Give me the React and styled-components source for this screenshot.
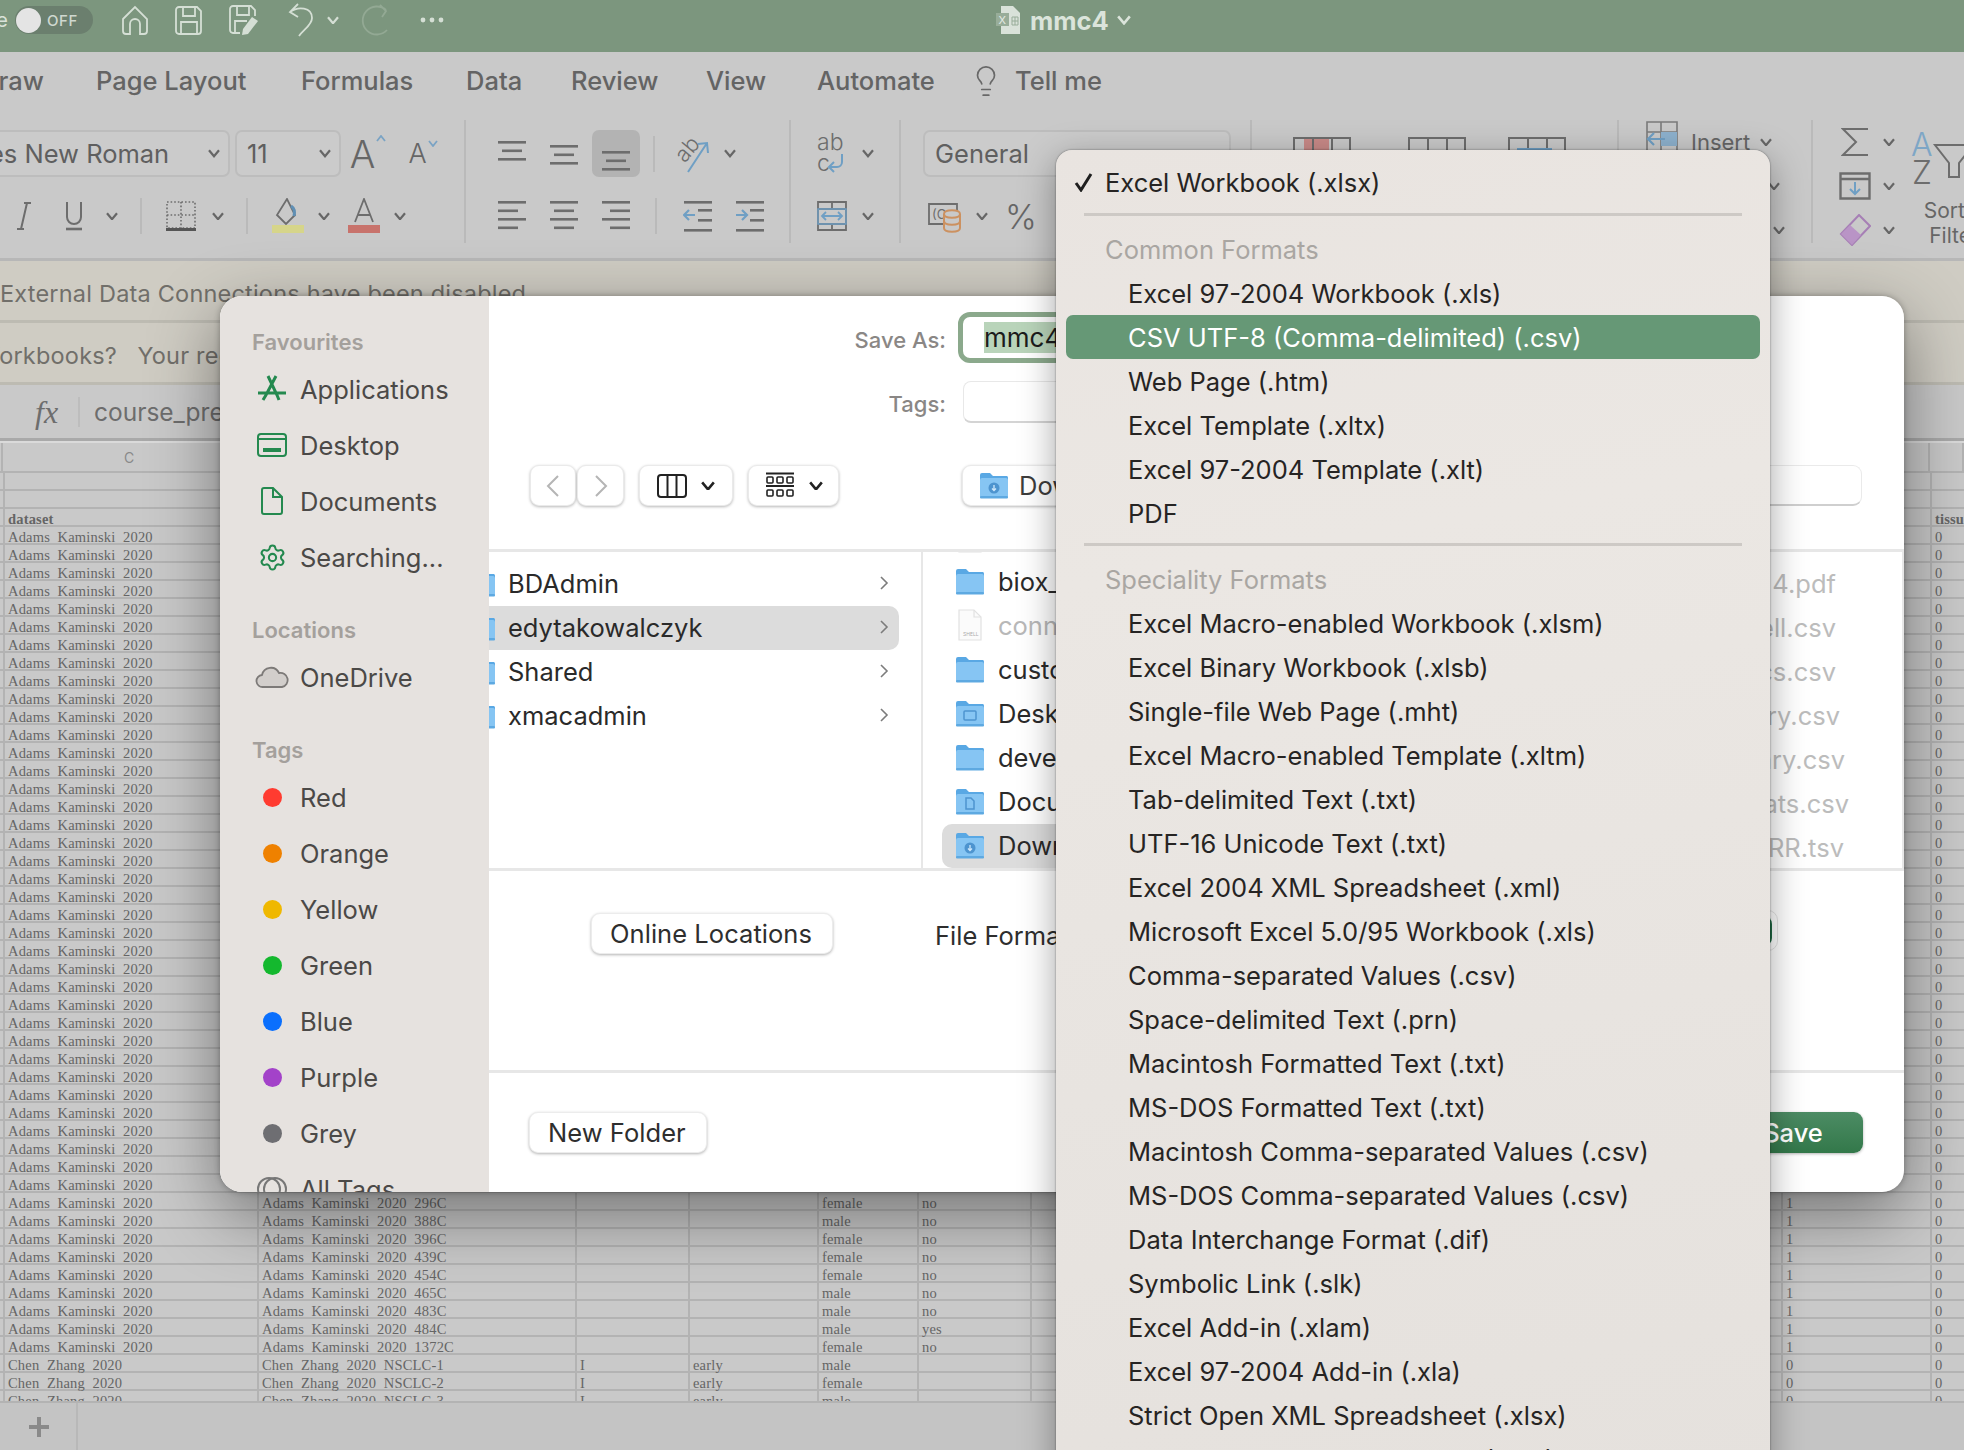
import React from "react";
import styled, { createGlobalStyle } from "styled-components";
import { Settings, Lightbulb } from "lucide-react";

const GlobalStyle = createGlobalStyle`
  html, body {
    margin: 0;
    padding: 0;
    background: #c8c8c8;
  }
  * {
    box-sizing: border-box;
  }
  svg {
    flex: none;
  }
`;

const UI = `Inter, "Liberation Sans", sans-serif`;

const Page = styled.div`
  position: relative;
  width: 1964px;
  height: 1450px;
  overflow: hidden;
  display: flex;
  flex-direction: column;
  font-family: ${UI};
  background: #c8c8c8;
`;

/* title bar */
const TitleBar = styled.div`
  flex: none;
  height: 52px;
  background: #7c967e;
  display: flex;
  align-items: center;
  padding-bottom: 12px;
  color: #d9e2d9;
`;

const AutoTail = styled.div`
  width: 8px;
  margin-right: 7px;
  display: flex;
  justify-content: flex-end;
  overflow: hidden;
  font-size: 20px;
`;

const Toggle = styled.div`
  width: 78px;
  height: 28px;
  border-radius: 14px;
  background: #6b7f6e;
  display: flex;
  align-items: center;
  gap: 6px;
  padding-left: 1px;
  font-size: 15px;
  font-weight: 500;
  letter-spacing: 0.6px;
  color: #cfd8cf;
`;

const Knob = styled.span`
  width: 25px;
  height: 25px;
  border-radius: 50%;
  background: #e4e4e4;
`;

const Slot = styled.div`
  flex: none;
  width: ${(p) => p.$w}px;
  display: flex;
  align-items: center;
  justify-content: center;
  color: #686868;
`;

const TitleText = styled.span`
  font-size: 25.5px;
  font-weight: 700;
  color: #dbe4db;
  margin: 0 8px 0 9px;
`;

const Spacer = styled.div`
  flex: none;
  width: ${(p) => p.$w}px;
`;

/* ribbon */
const Ribbon = styled.div`
  flex: none;
  height: 209px;
  border-bottom: 3px solid #b7b7b7;
  background: #c9c9c9;
  display: flex;
  flex-direction: column;
`;

const Tabs = styled.div`
  flex: none;
  height: 58px;
  margin-left: -20px;
  display: flex;
  align-items: center;
  padding-bottom: 1px;
  color: #616161;
  font-size: 25.5px;
  font-weight: 500;
`;

const Tab = styled.div`
  flex: none;
  width: ${(p) => p.$w}px;
  white-space: nowrap;
  color: #646464;
`;

const RibbonBody = styled.div`
  flex: none;
  margin-top: 10px;
  height: 123px;
  display: flex;
`;

const Group = styled.div`
  flex: none;
  width: ${(p) => p.$w}px;
  height: 123px;
  padding-left: ${(p) => p.$pad || 0}px;
  border-right: 2px solid #bababa;
  display: flex;
  flex-direction: column;
`;

const TopRow = styled.div`
  flex: none;
  margin-top: 10px;
  height: 47px;
  display: flex;
  align-items: center;
`;

const BottomRow = styled.div`
  flex: none;
  margin-top: 15px;
  height: 48px;
  display: flex;
  align-items: center;
`;

const TriRow = styled.div`
  flex: none;
  height: 44px;
  display: flex;
  align-items: center;
`;

const Select = styled.div`
  flex: none;
  width: ${(p) => p.$w}px;
  height: 47px;
  margin-left: ${(p) => p.$ml || 0}px;
  margin-right: ${(p) => p.$mr || 0}px;
  padding: 0 8px 0 ${(p) => p.$pl || 10}px;
  border: 2px solid #bdbdbd;
  border-radius: 7px;
  background: #cbcbcb;
  display: flex;
  align-items: center;
  justify-content: space-between;
  font-size: 25.5px;
  color: #5f5f5f;
  white-space: nowrap;
`;

const Pressed = styled(Slot)`
  height: 47px;
  margin: 0 2px;
  width: 48px;
  background: #b3b3b3;
  border-radius: 7px;
`;

const GrowA = styled.span`
  display: inline-flex;
  align-items: flex-start;
  gap: 1px;
  font-weight: 300;
  font-size: ${(p) => p.$size}px;
  line-height: 1;
  color: #666;
`;

const Percent = styled.span`
  font-size: 34px;
  font-weight: 300;
  color: #666;
`;

const InsertLabel = styled.span`
  font-size: 22px;
  color: #666;
  margin: 0 10px 0 12px;
`;

const EditRow = styled.div`
  flex: none;
  display: flex;
  height: 123px;
`;

const EditIcons = styled.div`
  width: 92px;
  padding-left: 22px;
  display: flex;
  flex-direction: column;
`;

const SortCol = styled.div`
  width: 64px;
  display: flex;
  flex-direction: column;
  align-items: center;
  padding-top: 10px;
  margin-left: 6px;
  font-size: 21px;
  line-height: 25px;
  color: #666;
  white-space: nowrap;
`;

const SortText = styled.span`
  margin-left: 22px;
  margin-top: ${(p) => p.$mt || 0}px;
`;

/* message bars */
const Notice = styled.div`
  flex: none;
  height: 62px;
  background: #cfccc3;
  border-bottom: 3px solid #bdbbb2;
  display: flex;
  align-items: center;
  padding-top: 5px;
  font-size: 23.5px;
  letter-spacing: 0.2px;
  color: #716f6a;
  white-space: nowrap;
  margin-left: ${(p) => p.$ml || 0}px;
`;

const FormulaBar = styled.div`
  flex: none;
  height: 53px;
  background: #c9c9c9;
  display: flex;
  align-items: center;
  padding-top: 1px;
  color: #6d6d6d;
  font-size: 24.5px;
`;

const Fx = styled.span`
  width: 80px;
  padding-left: 35px;
  font-family: "Liberation Serif", serif;
  font-style: italic;
  font-size: 32px;
  border-right: 2px solid #bdbdbd;
  line-height: 30px;
`;

const FormulaText = styled.span`
  margin-left: 14px;
`;

/* sheet */
const Sheet = styled.div`
  flex: 1;
  min-height: 0;
  overflow: hidden;
  background: #c9c9c9;
  border-top: 3px solid #a9a9a9;
  font-family: "Liberation Serif", serif;
  font-size: 14.5px;
  color: #656565;
`;

const HeaderRow = styled.div`
  height: 32px;
  display: flex;
  border-top: 2px solid #dadada;
  border-bottom: 2px solid #b3b3b3;
`;

const HeaderCell = styled.div`
  flex: none;
  width: ${(p) => p.$w}px;
  display: flex;
  align-items: center;
  justify-content: center;
  font-family: ${UI};
  font-size: 14px;
  color: #8a8a8a;
  border-right: 2px solid #b3b3b3;
`;

const SheetRow = styled.div`
  height: 18px;
  display: flex;
`;

const Cell = styled.div`
  flex: none;
  width: ${(p) => p.$w}px;
  height: 18px;
  padding-left: 3px;
  line-height: 21px;
  white-space: pre;
  overflow-x: clip;
  overflow-y: visible;
  letter-spacing: 0.18px;
  font-weight: ${(p) => (p.$head ? 700 : 400)};
  border-right: 2px solid #b3b3b3;
  border-bottom: 2px solid #b3b3b3;
`;

const BottomBar = styled.div`
  flex: none;
  height: 49px;
  background: #c4c4c4;
  border-top: 2px solid #b3b3b3;
  display: flex;
`;

const AddSheet = styled.div`
  width: 78px;
  padding-left: 2px;
  display: flex;
  align-items: center;
  justify-content: center;
  border-right: 2px solid #b8b8b8;
`;

/* save dialog */
const Dialog = styled.div`
  position: absolute;
  left: 220px;
  top: 296px;
  width: 1684px;
  height: 896px;
  border-radius: 22px;
  overflow: hidden;
  background: #fff;
  display: flex;
`;

const DialogShadow = styled.div`
  position: absolute;
  left: 220px;
  top: 296px;
  width: 1684px;
  height: 896px;
  border-radius: 22px;
  box-shadow: 0 22px 70px rgba(0, 0, 0, 0.44), 0 0 6px rgba(0, 0, 0, 0.3);
`;

const Sidebar = styled.div`
  flex: none;
  width: 269px;
  background: #e6e2df;
  padding: 24px 0 0 32px;
  overflow: hidden;
`;

const SideHead = styled.div`
  height: 41px;
  margin-top: ${(p) => (p.$first ? 0 : 23)}px;
  padding-top: 2px;
  display: flex;
  align-items: center;
  font-size: 22px;
  font-weight: 600;
  color: #a4a09c;
`;

const SideItem = styled.div`
  height: 56px;
  display: flex;
  align-items: center;
  gap: 8px;
  font-size: 25.5px;
  color: #4b4947;
`;

const SideIcon = styled.span`
  flex: none;
  width: 40px;
  display: flex;
  align-items: center;
  justify-content: center;
  color: #24894f;
`;

const TagDot = styled.span`
  width: 19px;
  height: 19px;
  border-radius: 50%;
  background: ${(p) => p.$color};
`;

const Main = styled.div`
  flex: 1;
  min-width: 0;
  display: flex;
  flex-direction: column;
`;

const Head = styled.div`
  flex: none;
  height: 253px;
  padding-top: 16px;
  display: flex;
  flex-direction: column;
`;

const FieldRow = styled.div`
  display: flex;
  align-items: center;
  margin-top: ${(p) => p.$mt || 0}px;
`;

const FieldLabel = styled.div`
  width: 457px;
  padding-top: 4px;
  text-align: right;
  font-size: 22px;
  font-weight: 500;
  color: #8a8785;
`;

const NameInput = styled.div`
  margin-left: 12px;
  width: 600px;
  height: 51px;
  border: 5px solid #8ba98c;
  border-radius: 12px;
  background: #fff;
  padding: 0 0 0 21px;
  display: flex;
  align-items: center;
  font-size: 26px;
  color: #1c1c1c;
`;

const Selected = styled.span`
  background: #b9d4ba;
  height: 31px;
  line-height: 31px;
`;

const TagInput = styled.div`
  margin-left: 17px;
  width: 600px;
  height: 42px;
  border: 1px solid #e8e8e8;
  border-bottom: 2px solid #d4d4d4;
  border-radius: 8px;
  background: #fff;
`;

const NavRow = styled.div`
  margin-top: 42px;
  margin-left: 41px;
  display: flex;
  align-items: center;
`;

const NavButton = styled.div`
  flex: none;
  width: ${(p) => p.$w}px;
  height: 41px;
  margin-left: ${(p) => p.$ml || 0}px;
  border: 1px solid #eaeaea;
  border-radius: 9px;
  background: #fff;
  box-shadow: 0 1px 3px rgba(0, 0, 0, 0.28);
  display: flex;
  align-items: center;
  justify-content: center;
  gap: 14px;
  color: #333;
  font-size: 25.5px;
`;

const LocationButton = styled(NavButton)`
  justify-content: flex-start;
  padding-left: 16px;
  gap: 10px;
  color: #3c3c3c;
`;

const SearchField = styled.div`
  margin-left: auto;
  margin-right: 42px;
  width: 300px;
  height: 41px;
  border: 1px solid #eaeaea;
  border-bottom: 2px solid #cfcfcf;
  border-radius: 9px;
  background: #fff;
`;

const Browser = styled.div`
  flex: none;
  height: 322px;
  border-top: 3px solid #e7e7e7;
  border-bottom: 3px solid #e7e7e7;
  border-right: 2px solid #e7e7e7;
  display: flex;
  overflow: hidden;
`;

const FirstColumn = styled.div`
  flex: none;
  width: 434px;
  padding-top: 10px;
  border-right: 2px solid #e7e7e7;
`;

const FolderRow = styled.div`
  height: 44px;
  margin-right: 22px;
  padding: 0 10px 2px 0;
  border-radius: 0 10px 10px 0;
  background: ${(p) => (p.$active ? "#dcdcdc" : "transparent")};
  display: flex;
  align-items: center;
  font-size: 25.5px;
  color: #2a2a2a;
  overflow: hidden;
`;

const RowName = styled.span`
  flex: 1;
  margin-left: 12px;
`;

const FirstFolder = styled.span`
  flex: none;
  width: 7px;
  display: flex;
  justify-content: flex-end;
  overflow: hidden;
`;

const SecondColumn = styled.div`
  flex: none;
  width: 520px;
  margin-top: -36px;
  padding-left: 19px;
  border-right: 2px solid #e7e7e7;
`;

const FileRow = styled.div`
  height: 44px;
  margin-right: 12px;
  padding: 0 0 2px 13px;
  border-radius: 10px;
  background: ${(p) => (p.$active ? "#dcdcdc" : "transparent")};
  display: flex;
  align-items: center;
  gap: 13px;
  font-size: 25.5px;
  white-space: nowrap;
  color: ${(p) => (p.$dim ? "#b8b8b8" : "#2a2a2a")};
`;

const ThirdColumn = styled.div`
  flex: 1;
  padding-top: 9px;
`;

const GreyFile = styled.div`
  height: 44px;
  display: flex;
  align-items: center;
  justify-content: flex-end;
  padding-right: ${(p) => p.$pr}px;
  font-size: 25.5px;
  color: #bcbcbc;
  white-space: nowrap;
`;

const Options = styled.div`
  flex: none;
  height: 202px;
  padding-top: 42px;
  border-bottom: 3px solid #e7e7e7;
  display: flex;
  align-items: flex-start;
`;

const PlainButton = styled.div`
  flex: none;
  height: 41px;
  margin-left: ${(p) => p.$ml}px;
  padding: 0 20px 0 18px;
  border: 1px solid #ececec;
  border-radius: 9px;
  background: #fff;
  box-shadow: 0 1px 3px rgba(0, 0, 0, 0.3);
  display: flex;
  align-items: center;
  font-size: 25.5px;
  letter-spacing: 0.05px;
  color: #2e2e2e;
`;

const FormatLabel = styled.div`
  margin-left: 102px;
  height: 44px;
  display: flex;
  align-items: center;
  font-size: 25.5px;
  color: #2e2e2e;
  white-space: nowrap;
`;

const FormatPopup = styled.div`
  margin-left: auto;
  margin-right: 126px;
  margin-top: -3px;
  width: 600px;
  height: 41px;
  padding: 5px;
  border: 1px solid #e4e4e4;
  border-radius: 10px;
  background: #fff;
  display: flex;
  justify-content: flex-end;
`;

const FormatChevron = styled.div`
  width: 30px;
  height: 30px;
  border-radius: 8px;
  background: #1f6b45;
`;

const Footer = styled.div`
  flex: 1;
  padding: 39px 41px 0 40px;
  display: flex;
  justify-content: space-between;
  align-items: flex-start;
`;

const SaveButton = styled.div`
  width: 140px;
  height: 41px;
  border-radius: 9px;
  background: linear-gradient(#4c8c64, #33784a);
  box-shadow: 0 1px 3px rgba(0, 0, 0, 0.3);
  display: flex;
  align-items: center;
  justify-content: center;
  font-size: 25.5px;
  font-weight: 500;
  color: #fff;
`;

/* file format menu */
const Menu = styled.div`
  position: absolute;
  left: 1056px;
  top: 150px;
  width: 714px;
  height: 1340px;
  padding: 10px 10px 0;
  border-radius: 16px;
  background: linear-gradient(170deg, #e9e4e0, #ebe7e3 30%, #e5e1dd);
  box-shadow: 0 10px 36px rgba(0, 0, 0, 0.36), 0 0 2px rgba(0, 0, 0, 0.5);
  overflow: hidden;
  font-size: 25.5px;
`;

const MenuItem = styled.div`
  height: 44px;
  padding-left: ${(p) => (p.$top ? 39 : 62)}px;
  border-radius: 7px;
  display: flex;
  align-items: center;
  white-space: nowrap;
  position: relative;
  color: ${(p) => (p.$on ? "#fff" : "#262423")};
  background: ${(p) => (p.$on ? "#669876" : "transparent")};
`;

const MenuCheck = styled.span`
  position: absolute;
  left: 8px;
  top: 12px;
  display: flex;
`;

const MenuHead = styled.div`
  height: 44px;
  padding-left: 39px;
  display: flex;
  align-items: center;
  color: #a9a6a2;
`;

const MenuLine = styled.div`
  height: 3px;
  margin: ${(p) => p.$m};
  background: #cdc9c5;
`;

/* drawings */
const Chev = ({ c = "#666", w = 12 }) => (
  <svg width={w} height={w * 0.7} viewBox="0 0 12 8" fill="none" stroke={c} strokeWidth="2.2">
    <path d="M1 1l5 6 5-6" />
  </svg>
);

const Lines = ({ rows, short, align = "left", top = 0 }) => (
  <svg width="30" height="34" viewBox="0 0 30 34" fill="#6d6d6d">
    {Array.from({ length: rows }).map((_, i) => {
      const s = short.includes(i);
      const w = s ? 20 : 28;
      const x = align === "left" ? 1 : align === "right" ? 29 - w : 15 - w / 2;
      return <rect key={i} x={x} y={top + i * 8.5} width={w} height="2.6" />;
    })}
  </svg>
);

const Home = () => (
  <svg width="30" height="31" viewBox="0 0 30 31" fill="none" stroke="#d5dfd5" strokeWidth="1.8">
    <path d="M3 14L15 2l12 12v12a3 3 0 0 1-3 3h-4V19a5 5 0 0 0-10 0v10H6a3 3 0 0 1-3-3z" />
  </svg>
);

const SaveIcon = () => (
  <svg width="30" height="31" viewBox="0 0 30 31" fill="none" stroke="#d5dfd5" strokeWidth="1.8">
    <path d="M5 2h18l4 4v20a3 3 0 0 1-3 3H5a3 3 0 0 1-3-3V5a3 3 0 0 1 3-3z" />
    <path d="M9 2v9h12V2M7 29V17h16v12" />
  </svg>
);

const SaveAsIcon = () => (
  <svg width="32" height="32" viewBox="0 0 32 32" fill="none" stroke="#d5dfd5" strokeWidth="1.8">
    <path d="M12 29H5a3 3 0 0 1-3-3V5a3 3 0 0 1 3-3h18l4 4v6" />
    <path d="M9 2v9h12V2M7 29V17h12" />
    <path d="M24 13l6 4-10 13-6 1 1-6z" fill="#d5dfd5" stroke="none" />
  </svg>
);

const Undo = () => (
  <svg width="30" height="34" viewBox="0 0 30 34" fill="none" stroke="#d5dfd5" strokeWidth="1.8">
    <path d="M11 1L3 9l8 5M3 9c8-6 22-5 22 6 0 7-8 11-13 18" />
  </svg>
);

const Redo = () => (
  <svg width="32" height="34" viewBox="0 0 32 34" fill="none" stroke="#93a994" strokeWidth="1.8">
    <path d="M26 7a14 14 0 1 0 1 20M20 2l6 6-4 6" />
  </svg>
);

const XlsDoc = () => (
  <svg width="26" height="30" viewBox="0 0 26 30">
    <path d="M6 1h12l7 7v21H6z" fill="#d9e2d9" />
    <rect x="1" y="8" width="13" height="13" fill="#98ad99" />
    <text x="3.5" y="19" fontSize="11" fill="#e4ebe4" fontFamily="Inter">X</text>
    <path d="M17 12h6v8h-6zM17 16h6M20 12v8" stroke="#98ad99" fill="none" strokeWidth="1" />
  </svg>
);

const Caret = ({ down }) => (
  <svg width="10" height="7" viewBox="0 0 10 7" fill="none" stroke="#7aa3c4" strokeWidth="1.8">
    <path d={down ? "M1 1l4 5 4-5" : "M1 6l4-5 4 5"} />
  </svg>
);

const Orientation = () => (
  <svg width="40" height="38" viewBox="0 0 40 38">
    <text x="3" y="24" transform="rotate(-50 12 18)" fontSize="22" fill="#6d6d6d" fontFamily="Inter" fontWeight="300">ab</text>
    <path d="M14 37L33 8M24 9l9-1 1 10" fill="none" stroke="#6f9fc4" strokeWidth="2" />
  </svg>
);

const Wrap = () => (
  <svg width="36" height="42" viewBox="0 0 36 42">
    <text x="3" y="17" fontSize="23" fill="#6d6d6d" fontFamily="Inter" fontWeight="300">ab</text>
    <text x="3" y="38" fontSize="23" fill="#6d6d6d" fontFamily="Inter" fontWeight="300">c</text>
    <path d="M28 21v8a5 5 0 0 1-5 5h-8M20 29l-5 5 5 5" fill="none" stroke="#6f9fc4" strokeWidth="2" />
  </svg>
);

const BorderIcon = () => (
  <svg width="32" height="32" viewBox="0 0 32 32" fill="none">
    <path d="M2 2h28v26H2zM16 2v26M2 15h28" stroke="#6d6d6d" strokeWidth="1.6" strokeDasharray="1.6 2" />
    <rect x="1" y="28" width="30" height="3" fill="#555" />
  </svg>
);

const Bucket = () => (
  <svg width="34" height="36" viewBox="0 0 34 36">
    <path d="M16 1l-10 16 9 9 9-9z" fill="none" stroke="#6d6d6d" strokeWidth="1.8" />
    <path d="M20 8c3 2 4 6 3 10" fill="none" stroke="#5f8fb4" strokeWidth="3" />
    <rect x="1" y="27" width="32" height="8" fill="#d6d58a" />
  </svg>
);

const FontColor = () => (
  <svg width="34" height="36" viewBox="0 0 34 36">
    <path d="M8 24L17 1l9 23M11 17h12" fill="none" stroke="#6d6d6d" strokeWidth="1.8" />
    <rect x="1" y="27" width="32" height="8" fill="#c8736c" />
  </svg>
);

const Indent = ({ flip }) => (
  <svg width="30" height="34" viewBox="0 0 30 34">
    <rect x="1" y="2" width="28" height="2.6" fill="#6d6d6d" />
    <rect x="15" y="10" width="14" height="2.6" fill="#6d6d6d" />
    <rect x="15" y="20" width="14" height="2.6" fill="#6d6d6d" />
    <rect x="1" y="30" width="28" height="2.6" fill="#6d6d6d" />
    <path d={flip ? "M1 16h10M7 11l5 5-5 5" : "M12 16H2M6 11l-5 5 5 5"} fill="none" stroke="#6f9fc4" strokeWidth="2.2" />
  </svg>
);

const Merge = () => (
  <svg width="32" height="32" viewBox="0 0 32 32" fill="none" stroke="#6d6d6d" strokeWidth="1.8">
    <path d="M2 2h28v28H2zM2 9h28M2 24h28M16 2v7M16 24v6" />
    <path d="M6 16h20M10 12l-4 4 4 4M22 12l4 4-4 4" stroke="#6f9fc4" />
    <path d="M2 9h28v15H2z" stroke="#6f9fc4" strokeWidth="1.4" />
  </svg>
);

const Currency = () => (
  <svg width="36" height="36" viewBox="0 0 36 36" fill="none">
    <path d="M24 26H2V6h28v10" stroke="#6d6d6d" strokeWidth="1.8" />
    <text x="5" y="21" fontSize="13" fill="#6d6d6d" fontFamily="Inter">(C</text>
    <path d="M17 16c0-5 16-5 16 0v14c0 5-16 5-16 0z" fill="#c9c9c9" stroke="#cc9160" strokeWidth="2" />
    <path d="M17 16c0 5 16 5 16 0M17 23c0 5 16 5 16 0" stroke="#cc9160" strokeWidth="2" />
  </svg>
);

const CondIcon = ({ cell, band }) => (
  <svg width="58" height="34" viewBox="0 0 58 34" fill="none">
    {cell && <rect x="11" y="1" width="25" height="33" fill="#c98a88" />}
    <path d="M1 1h56v32H1zM20 1v32M39 1v32" stroke="#6d6d6d" strokeWidth="2" />
    {band && <rect x="9" y="11" width="35" height="8" fill="#6f9fc4" />}
  </svg>
);

const InsertIcon = () => (
  <svg width="34" height="44" viewBox="0 0 34 44" fill="none">
    <path d="M2 2h30v40H2zM2 12h30M16 2v40" stroke="#7b7b7b" strokeWidth="1.6" />
    <rect x="16" y="12" width="16" height="14" fill="#8db1cd" />
    <path d="M20 19H3M9 13l-6 6 6 6" stroke="#6f9fc4" strokeWidth="2.2" />
  </svg>
);

const Sigma = () => (
  <svg width="28" height="30" viewBox="0 0 28 30" fill="none" stroke="#6d6d6d" strokeWidth="2">
    <path d="M27 2H2l13 13L2 28h25" />
  </svg>
);

const FillDown = () => (
  <svg width="32" height="28" viewBox="0 0 32 28" fill="none">
    <path d="M1.5 1.5h29v25h-29zM1.5 7h29" stroke="#6d6d6d" strokeWidth="2.4" />
    <path d="M16 10v12M11 17l5 5 5-5" stroke="#6f9fc4" strokeWidth="2" />
  </svg>
);

const Eraser = () => (
  <svg width="32" height="32" viewBox="0 0 32 32">
    <path d="M2 20L20 1l11 11-18 19z" fill="none" stroke="#a67fb5" strokeWidth="2" />
    <path d="M2 20l9-9 11 10-9 10z" fill="#b994c6" />
  </svg>
);

const SortIcon = () => (
  <svg width="64" height="56" viewBox="0 0 64 56">
    <text x="0" y="26" fontSize="32" fill="#7ea6c6" fontFamily="Inter" fontWeight="300">A</text>
    <text x="1" y="54" fontSize="32" fill="#6d6d6d" fontFamily="Inter" fontWeight="300">Z</text>
    <path d="M24 15h38L48 33v14h-10V33z" fill="none" stroke="#6d6d6d" strokeWidth="2" />
  </svg>
);

const AppStore = () => (
  <svg width="30" height="28" viewBox="0 0 30 28" fill="none" stroke="currentColor" strokeWidth="3">
    <path d="M11 1l9 19 2 5M19 1L9 20l-3 5M1 18h28" />
  </svg>
);

const DesktopIcon = () => (
  <svg width="30" height="26" viewBox="0 0 30 26" fill="none" stroke="currentColor" strokeWidth="2">
    <rect x="1" y="2" width="28" height="22" rx="3" />
    <path d="M1 7h28" />
    <rect x="6" y="16" width="18" height="4" fill="currentColor" stroke="none" />
  </svg>
);

const DocIcon = () => (
  <svg width="22" height="28" viewBox="0 0 22 28" fill="none" stroke="currentColor" strokeWidth="2">
    <path d="M3 1h9l9 9v15a2 2 0 0 1-2 2H3a2 2 0 0 1-2-2V3a2 2 0 0 1 2-2zM12 1v9h9" />
  </svg>
);

const CloudIcon = () => (
  <svg width="34" height="22" viewBox="0 0 34 22">
    <path d="M8 21a6 6 0 0 1-1-12 9 9 0 0 1 17-2 7 7 0 0 1 3 14z" fill="#d2cecb" stroke="#7d7a78" strokeWidth="1.8" />
  </svg>
);

const AllTagsIcon = () => (
  <svg width="30" height="28" viewBox="0 0 30 28" fill="none" stroke="#777" strokeWidth="2">
    <circle cx="12" cy="14" r="11" />
    <circle cx="18" cy="14" r="11" />
  </svg>
);

const Folder = ({ kind }) => (
  <svg width="30" height="27" viewBox="0 0 30 27">
    <path d="M1 3a2 2 0 0 1 2-2h8l3 3h14a2 2 0 0 1 1 2v4H1z" fill="#59a8e4" />
    <rect x="1" y="6" width="28" height="20" rx="2" fill="#86c5f3" />
    <rect x="1" y="24" width="28" height="2.5" rx="1" fill="#5ea9e1" />
    {kind === "desk" && <rect x="9" y="11" width="12" height="9" rx="1" fill="none" stroke="#4d94cf" strokeWidth="1.5" />}
    {kind === "doc" && <path d="M11 10h5l3 3v8h-8z" fill="none" stroke="#4d94cf" strokeWidth="1.5" />}
    {kind === "down" && (
      <g>
        <circle cx="15" cy="16" r="5.5" fill="#4d94cf" />
        <path d="M15 13v5M13 16.5l2 2 2-2" stroke="#cfe8fb" strokeWidth="1.3" fill="none" />
      </g>
    )}
  </svg>
);

const ShellFile = () => (
  <svg width="30" height="32" viewBox="0 0 30 32">
    <path d="M4 1h15l7 7v23H4z" fill="#fbfbfb" stroke="#e2e2e2" strokeWidth="1.2" />
    <path d="M19 1v7h7" fill="none" stroke="#e2e2e2" strokeWidth="1.2" />
    <text x="8" y="27" fontSize="5" fill="#aaa" fontFamily="Inter">SHELL</text>
  </svg>
);

const RowChevron = () => (
  <svg width="10" height="16" viewBox="0 0 10 16" fill="none" stroke="#7c7c7c" strokeWidth="1.6">
    <path d="M2 2l6 6-6 6" />
  </svg>
);

const NavArrow = ({ right }) => (
  <svg width="14" height="24" viewBox="0 0 14 24" fill="none" stroke="#b5b5b5" strokeWidth="2">
    <path d={right ? "M2 2l10 10L2 22" : "M12 2L2 12l10 10"} />
  </svg>
);

const ColumnsIcon = () => (
  <svg width="30" height="24" viewBox="0 0 30 24" fill="none" stroke="#222" strokeWidth="2">
    <rect x="1" y="1" width="28" height="22" rx="3" />
    <path d="M10.5 1v22M19.5 1v22" />
  </svg>
);

const GroupIcon = () => (
  <svg width="30" height="28" viewBox="0 0 30 28" fill="none" stroke="#222" strokeWidth="1.6">
    <path d="M1 1.5h28M1 14h28" strokeWidth="2" />
    <rect x="2" y="5" width="6" height="6" rx="1" />
    <rect x="12" y="5" width="6" height="6" rx="1" />
    <rect x="22" y="5" width="6" height="6" rx="1" />
    <rect x="2" y="18" width="6" height="6" rx="1" />
    <rect x="12" y="18" width="6" height="6" rx="1" />
    <rect x="22" y="18" width="6" height="6" rx="1" />
  </svg>
);

const Check = () => (
  <svg width="20" height="20" viewBox="0 0 20 20" fill="none" stroke="#1f1f1f" strokeWidth="3">
    <path d="M2 11l5 7L17 2" />
  </svg>
);

const ToolSep = () => (
  <svg width="2" height="36"><rect width="2" height="36" fill="#bababa" /></svg>
);

/* data */
const colWidths = [3, 254, 318, 113, 129, 100, 113, 751, 149, 34];

const bottomSamples = {
  38: ["296C", "female", "no"],
  39: ["388C", "male", "no"],
  40: ["396C", "female", "no"],
  41: ["439C", "female", "no"],
  42: ["454C", "female", "no"],
  43: ["465C", "male", "no"],
  44: ["483C", "male", "no"],
  45: ["484C", "male", "yes"],
  46: ["1372C", "female", "no"],
};

const ADAMS = "Adams  Kaminski  2020";
const CHEN = "Chen  Zhang  2020";

const makeRow = (n) => {
  if (n <= 46) {
    const s = bottomSamples[n] || [`${100 + n * 5}C`, "female", "no"];
    return ["", ADAMS, `${ADAMS}  ${s[0]}`, "", "", s[1], s[2], "", "1", "0"];
  }
  const sex = n === 48 ? "female" : "male";
  return ["", CHEN, `${CHEN}  NSCLC-${n - 46}`, "I", "early", sex, "", "", "0", "0"];
};

const rows = Array.from({ length: 49 }, (_, i) => makeRow(i + 1));

const favourites = [
  ["Applications", <AppStore key="a" />],
  ["Desktop", <DesktopIcon key="d" />],
  ["Documents", <DocIcon key="o" />],
  ["Searching...", <Settings key="s" size={29} strokeWidth={1.7} />],
];

const tags = [
  ["Red", "#ff3b30"],
  ["Orange", "#ef8100"],
  ["Yellow", "#efb800"],
  ["Green", "#14b82e"],
  ["Blue", "#0a6ffd"],
  ["Purple", "#a342c9"],
  ["Grey", "#6e6e72"],
];

const homeFolders = ["BDAdmin", "edytakowalczyk", "Shared", "xmacadmin"];

const greyFiles = [
  ["Figure 4.pdf", 66],
  ["single_cell.csv", 66],
  ["metrics.csv", 66],
  ["summary.csv", 62],
  ["glossary.csv", 57],
  ["formats.csv", 53],
  ["TCRR.tsv", 58],
];

const commonFormats = [
  "Excel 97-2004 Workbook (.xls)",
  "CSV UTF-8 (Comma-delimited) (.csv)",
  "Web Page (.htm)",
  "Excel Template (.xltx)",
  "Excel 97-2004 Template (.xlt)",
  "PDF",
];

const specialFormats = [
  "Excel Macro-enabled Workbook (.xlsm)",
  "Excel Binary Workbook (.xlsb)",
  "Single-file Web Page (.mht)",
  "Excel Macro-enabled Template (.xltm)",
  "Tab-delimited Text (.txt)",
  "UTF-16 Unicode Text (.txt)",
  "Excel 2004 XML Spreadsheet (.xml)",
  "Microsoft Excel 5.0/95 Workbook (.xls)",
  "Comma-separated Values (.csv)",
  "Space-delimited Text (.prn)",
  "Macintosh Formatted Text (.txt)",
  "MS-DOS Formatted Text (.txt)",
  "Macintosh Comma-separated Values (.csv)",
  "MS-DOS Comma-separated Values (.csv)",
  "Data Interchange Format (.dif)",
  "Symbolic Link (.slk)",
  "Excel Add-in (.xlam)",
  "Excel 97-2004 Add-in (.xla)",
  "Strict Open XML Spreadsheet (.xlsx)",
  "OpenDocument Spreadsheet (.ods)",
];

const TopBar = () => (
  <TitleBar>
    <AutoTail>
      <span>AutoSave</span>
    </AutoTail>
    <Toggle>
      <Knob />
      OFF
    </Toggle>
    <Spacer $w={27} />
    <Slot $w={30}><Home /></Slot>
    <Spacer $w={24} />
    <Slot $w={30}><SaveIcon /></Slot>
    <Spacer $w={24} />
    <Slot $w={32}><SaveAsIcon /></Slot>
    <Spacer $w={27} />
    <Slot $w={30}><Undo /></Slot>
    <Slot $w={32}><Chev c="#d5dfd5" /></Slot>
    <Spacer $w={11} />
    <Slot $w={32}><Redo /></Slot>
    <Spacer $w={25} />
    <Slot $w={30}><svg width="24" height="6" viewBox="0 0 24 6" fill="#d5dfd5"><circle cx="3" cy="3" r="2.4" /><circle cx="12" cy="3" r="2.4" /><circle cx="21" cy="3" r="2.4" /></svg></Slot>
    <Spacer $w={548} />
    <XlsDoc />
    <TitleText>mmc4</TitleText>
    <Chev c="#dbe4db" w={14} />
  </TitleBar>
);

const RibbonArea = () => (
  <Ribbon>
    <Tabs>
      <Tab $w={116}>Draw</Tab>
      <Tab $w={205}>Page Layout</Tab>
      <Tab $w={165}>Formulas</Tab>
      <Tab $w={105}>Data</Tab>
      <Tab $w={135}>Review</Tab>
      <Tab $w={111}>View</Tab>
      <Tab $w={157}>Automate</Tab>
      <Slot $w={24}><Lightbulb size={34} strokeWidth={1.2} /></Slot>
      <Spacer $w={17} />
      <Tab $w={100}>Tell me</Tab>
    </Tabs>
    <RibbonBody>
      <Group $w={466}>
        <TopRow>
          <Select $w={301} $ml={-71} $mr={5} $pl={13}>
            Times New Roman
            <Chev />
          </Select>
          <Select $w={106}>
            11
            <Chev />
          </Select>
          <Slot $w={54}>
            <GrowA $size={38}>A<Caret /></GrowA>
          </Slot>
          <Slot $w={56}>
            <GrowA $size={27}>A<Caret down /></GrowA>
          </Slot>
        </TopRow>
        <BottomRow>
          <Slot $w={48}>
            <svg width="16" height="28" viewBox="0 0 16 28" fill="none" stroke="#6d6d6d" strokeWidth="2"><path d="M8 1h7M1 27h7M11 1L5 27" /></svg>
          </Slot>
          <Slot $w={52}>
            <svg width="18" height="30" viewBox="0 0 18 30" fill="none" stroke="#6d6d6d" strokeWidth="2"><path d="M2 1v15a7 7 0 0 0 14 0V1" /><path d="M1 28h16" strokeWidth="2.6" /></svg>
          </Slot>
          <Slot $w={24}><Chev /></Slot>
          <Slot $w={34}><ToolSep /></Slot>
          <Slot $w={46}><BorderIcon /></Slot>
          <Slot $w={28}><Chev /></Slot>
          <Slot $w={30}><ToolSep /></Slot>
          <Slot $w={52}><Bucket /></Slot>
          <Slot $w={20}><Chev /></Slot>
          <Slot $w={60}><FontColor /></Slot>
          <Slot $w={12}><Chev /></Slot>
        </BottomRow>
      </Group>
      <Group $w={325} $pad={20}>
        <TopRow>
          <Slot $w={52}><Lines rows={3} short={[1]} align="center" top={4} /></Slot>
          <Slot $w={52}><Lines rows={3} short={[1]} align="center" top={8} /></Slot>
          <Pressed><Lines rows={3} short={[1]} align="center" top={14} /></Pressed>
          <Slot $w={24}><ToolSep /></Slot>
          <Slot $w={56}><Orientation /></Slot>
          <Slot $w={16}><Chev /></Slot>
        </TopRow>
        <BottomRow>
          <Slot $w={52}><Lines rows={4} short={[1, 3]} align="left" top={2} /></Slot>
          <Slot $w={52}><Lines rows={4} short={[1, 3]} align="center" top={2} /></Slot>
          <Slot $w={52}><Lines rows={4} short={[1, 3]} align="right" top={2} /></Slot>
          <Slot $w={28}><ToolSep /></Slot>
          <Slot $w={56}><Indent /></Slot>
          <Slot $w={48}><Indent flip /></Slot>
        </BottomRow>
      </Group>
      <Group $w={110} $pad={15}>
        <TopRow>
          <Slot $w={52}><Wrap /></Slot>
          <Slot $w={20}><Chev /></Slot>
        </TopRow>
        <BottomRow>
          <Slot $w={52}><Merge /></Slot>
          <Slot $w={20}><Chev /></Slot>
        </BottomRow>
      </Group>
      <Group $w={351} $pad={22}>
        <TopRow>
          <Select $w={308}>General</Select>
        </TopRow>
        <BottomRow>
          <Slot $w={44}><Currency /></Slot>
          <Slot $w={30}><Chev /></Slot>
          <Slot $w={48}><Percent>%</Percent></Slot>
        </BottomRow>
      </Group>
      <Group $w={367} $pad={20}>
        <TopRow>
          <Slot $w={100}><CondIcon cell /></Slot>
          <Slot $w={130}><CondIcon /></Slot>
          <Slot $w={70}><CondIcon band /></Slot>
        </TopRow>
      </Group>
      <Group $w={194} $pad={26}>
        <TriRow>
          <InsertIcon />
          <InsertLabel>Insert</InsertLabel>
          <Chev />
        </TriRow>
        <TriRow>
          <Spacer $w={123} />
          <Chev />
        </TriRow>
        <TriRow>
          <Spacer $w={128} />
          <Chev />
        </TriRow>
      </Group>
      <EditRow>
        <EditIcons>
          <TriRow>
            <Slot $w={40}><Sigma /></Slot>
            <Spacer $w={8} />
            <Chev />
          </TriRow>
          <TriRow>
            <Slot $w={40}><FillDown /></Slot>
            <Spacer $w={8} />
            <Chev />
          </TriRow>
          <TriRow>
            <Slot $w={40}><Eraser /></Slot>
            <Spacer $w={8} />
            <Chev />
          </TriRow>
        </EditIcons>
        <SortCol>
          <SortIcon />
          <SortText $mt={12}>Sort &amp;</SortText>
          <SortText>Filter</SortText>
        </SortCol>
      </EditRow>
    </RibbonBody>
  </Ribbon>
);

const Worksheet = () => (
  <Sheet>
    <HeaderRow>
      {colWidths.map((w, i) => (
        <HeaderCell key={i} $w={w}>{i === 1 ? "C" : ""}</HeaderCell>
      ))}
    </HeaderRow>
    <SheetRow>
      {colWidths.map((w, i) => <Cell key={i} $w={w} />)}
    </SheetRow>
    <SheetRow>
      {colWidths.map((w, i) => <Cell key={i} $w={w} />)}
    </SheetRow>
    <SheetRow>
      {colWidths.map((w, i) => (
        <Cell key={i} $w={w} $head>{i === 1 ? "dataset" : i === 9 ? "tissue" : ""}</Cell>
      ))}
    </SheetRow>
    {rows.map((row, r) => (
      <SheetRow key={r}>
        {row.map((text, i) => (
          <Cell key={i} $w={colWidths[i]}>{text}</Cell>
        ))}
      </SheetRow>
    ))}
  </Sheet>
);

const SaveDialog = () => (
  <>
    <DialogShadow />
    <Dialog>
      <Sidebar>
        <SideHead $first>Favourites</SideHead>
        {favourites.map(([label, icon]) => (
          <SideItem key={label}>
            <SideIcon>{icon}</SideIcon>
            {label}
          </SideItem>
        ))}
        <SideHead>Locations</SideHead>
        <SideItem>
          <SideIcon><CloudIcon /></SideIcon>
          OneDrive
        </SideItem>
        <SideHead>Tags</SideHead>
        {tags.map(([label, color]) => (
          <SideItem key={label}>
            <SideIcon><TagDot $color={color} /></SideIcon>
            {label}
          </SideItem>
        ))}
        <SideItem>
          <SideIcon><AllTagsIcon /></SideIcon>
          All Tags
        </SideItem>
      </Sidebar>
      <Main>
        <Head>
          <FieldRow>
            <FieldLabel>Save As:</FieldLabel>
            <NameInput><Selected>mmc4</Selected></NameInput>
          </FieldRow>
          <FieldRow $mt={18}>
            <FieldLabel>Tags:</FieldLabel>
            <TagInput />
          </FieldRow>
          <NavRow>
            <NavButton $w={46}><NavArrow /></NavButton>
            <NavButton $w={47} $ml={1}><NavArrow right /></NavButton>
            <NavButton $w={94} $ml={15}><ColumnsIcon /><Chev c="#222" w={14} /></NavButton>
            <NavButton $w={91} $ml={15}><GroupIcon /><Chev c="#222" w={14} /></NavButton>
            <LocationButton $w={240} $ml={123}><Folder kind="down" /> Downloads</LocationButton>
            <SearchField />
          </NavRow>
        </Head>
        <Browser>
          <FirstColumn>
            {homeFolders.map((name, i) => (
              <FolderRow key={name} $active={i === 1}>
                <FirstFolder><Folder /></FirstFolder>
                <RowName>{name}</RowName>
                <RowChevron />
              </FolderRow>
            ))}
          </FirstColumn>
          <SecondColumn>
            <FileRow $dim><ShellFile />archive</FileRow>
            <FileRow><Folder />biox_data</FileRow>
            <FileRow $dim><ShellFile />connect.sh</FileRow>
            <FileRow><Folder />custom</FileRow>
            <FileRow><Folder kind="desk" />Desktop</FileRow>
            <FileRow><Folder />development</FileRow>
            <FileRow><Folder kind="doc" />Documents</FileRow>
            <FileRow $active><Folder kind="down" />Downloads</FileRow>
          </SecondColumn>
          <ThirdColumn>
            {greyFiles.map(([name, pr]) => (
              <GreyFile key={name} $pr={pr}>{name}</GreyFile>
            ))}
          </ThirdColumn>
        </Browser>
        <Options>
          <PlainButton $ml={102}>Online Locations</PlainButton>
          <FormatLabel>File Format:</FormatLabel>
          <FormatPopup>
            <FormatChevron />
          </FormatPopup>
        </Options>
        <Footer>
          <PlainButton $ml={0}>New Folder</PlainButton>
          <SaveButton>Save</SaveButton>
        </Footer>
      </Main>
    </Dialog>
  </>
);

const FormatMenu = () => (
  <Menu>
    <MenuItem $top>
      <MenuCheck><Check /></MenuCheck>
      Excel Workbook (.xlsx)
    </MenuItem>
    <MenuLine $m="9px 18px 11px" />
    <MenuHead>Common Formats</MenuHead>
    {commonFormats.map((label, i) => (
      <MenuItem key={label} $on={i === 1}>{label}</MenuItem>
    ))}
    <MenuLine $m="8px 18px 11px" />
    <MenuHead>Speciality Formats</MenuHead>
    {specialFormats.map((label) => (
      <MenuItem key={label}>{label}</MenuItem>
    ))}
  </Menu>
);

const App = () => (
  <>
    <GlobalStyle />
    <Page>
      <TopBar />
      <RibbonArea />
      <Notice>External Data Connections have been disabled</Notice>
      <Notice $ml={-23}>Workbooks?&nbsp;&nbsp;&nbsp;Your recent changes</Notice>
      <FormulaBar>
        <Fx>fx</Fx>
        <FormulaText>course_prep</FormulaText>
      </FormulaBar>
      <Worksheet />
      <BottomBar>
        <AddSheet>
          <svg width="20" height="20" viewBox="0 0 20 20" fill="#8a8a8a"><rect x="8" width="4" height="20" /><rect y="8" width="20" height="4" /></svg>
        </AddSheet>
      </BottomBar>
      <SaveDialog />
      <FormatMenu />
    </Page>
  </>
);

export default App;
